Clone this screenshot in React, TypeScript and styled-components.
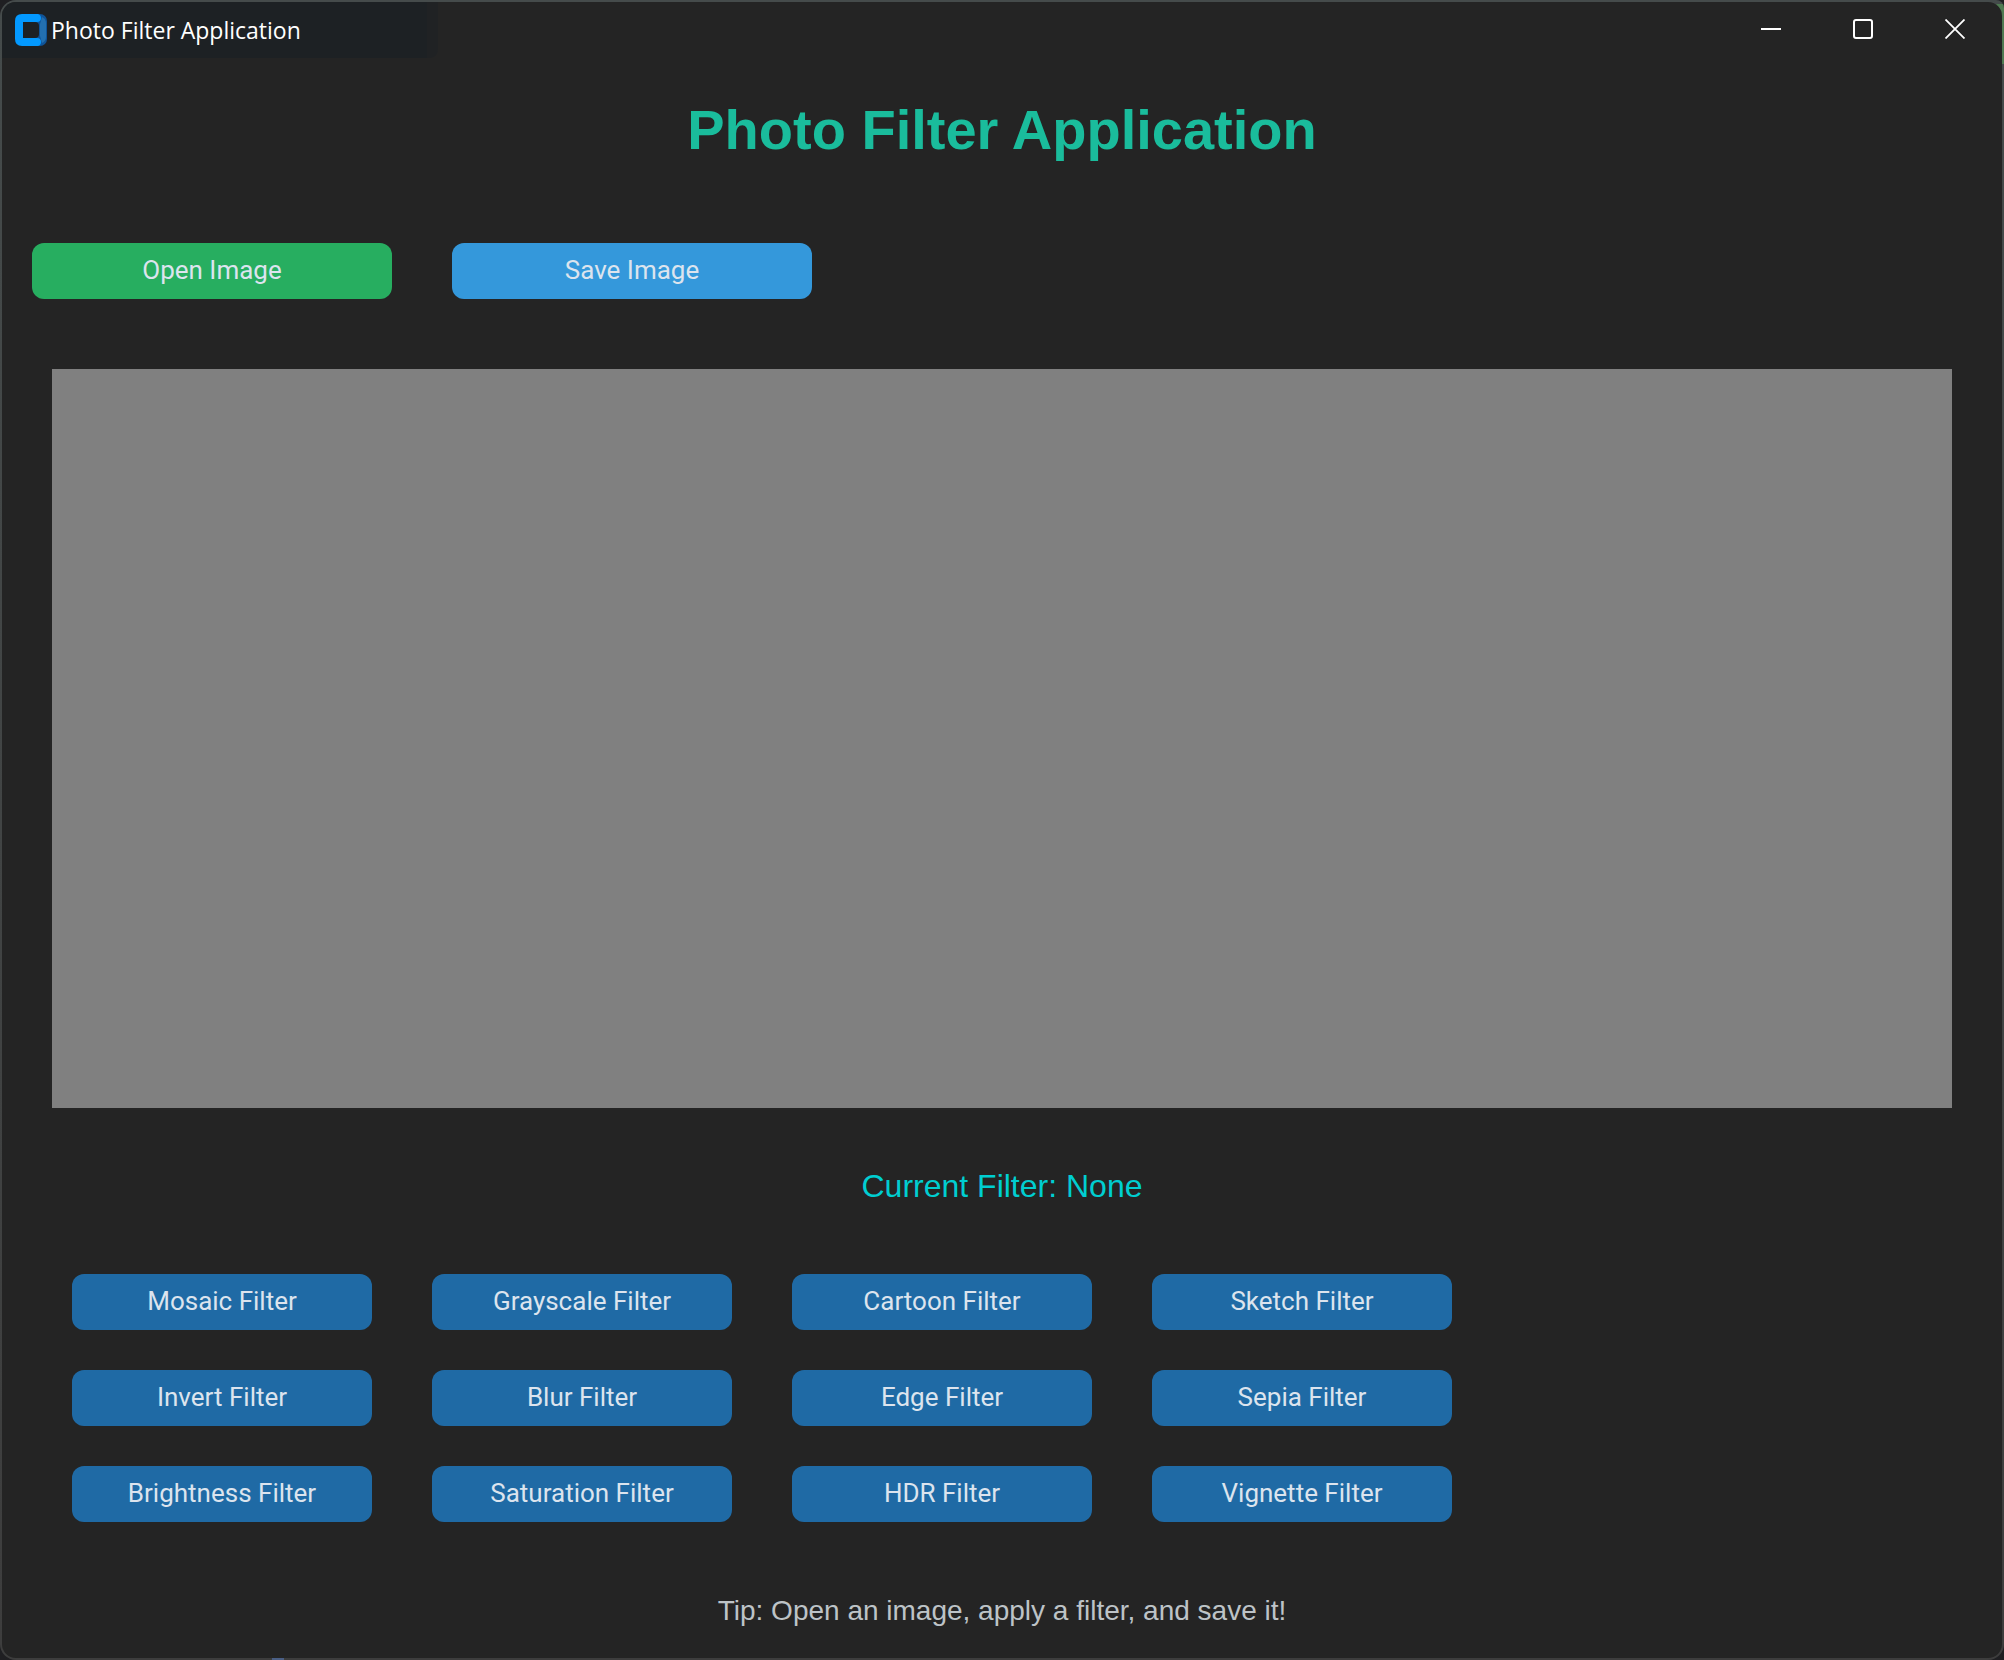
import React, { useState } from 'react';
import styled, { createGlobalStyle } from 'styled-components';

const GlobalStyle = createGlobalStyle`
  *, *::before, *::after { box-sizing: border-box; }
  body { margin: 0; background: #1f1f22; }
`;

const Frame = styled.div`
  display: flex;
  min-height: 100vh;
  padding: 2px;
  border-radius: 16px 8px 16px 16px;
  background:
    linear-gradient(#4f7a52, #4f7a52) right 4px / 14px 60px no-repeat,
    linear-gradient(#4a5f85, #4a5f85) 272px bottom / 12px 2px no-repeat,
    linear-gradient(#454b4b, #454b4b) left top / 100% 2px no-repeat,
    linear-gradient(#454b4b, #3d3d3d);
`;

const AppWindow = styled.main`
  flex: 1;
  display: flex;
  flex-direction: column;
  min-width: 0;
  border-radius: 14px;
  overflow: hidden;
  background: #242424;
`;

const TitleBar = styled.header`
  display: flex;
  justify-content: space-between;
  height: 56px;
  padding-right: 1px;
`;

const Caption = styled.div`
  display: flex;
  align-items: center;
  gap: 4px;
  width: 436px;
  padding: 0 13px;
  border-bottom-right-radius: 8px;
  background: linear-gradient(90deg, #1d2124 425px, #202224 425px);
  color: #ffffff;
  font: 23px/32px 'Open Sans', 'Noto Sans', sans-serif;
  white-space: nowrap;
`;

const WindowControls = styled.div`
  display: flex;
`;

const ControlButton = styled.button`
  display: grid;
  place-items: center;
  width: 92px;
  height: 54px;
  padding: 0;
  border: 0;
  background: transparent;
  color: #ffffff;
`;

const Heading = styled.h1`
  margin: 0;
  padding: 40px 20px 81px;
  color: #1abc9c;
  font: bold 56px/64px 'Liberation Sans', Arial, sans-serif;
  text-align: center;
`;

const ActionRow = styled.div`
  display: flex;
  gap: 60px;
  padding: 0 30px;
`;

const Button = styled.button<{ $color: string; $width: number }>`
  width: ${({ $width }) => $width}px;
  height: 56px;
  padding: 0 12px 2px;
  border: 0;
  border-radius: 12px;
  background: ${({ $color }) => $color};
  color: #dce4ee;
  font: 26px/32px Roboto, sans-serif;
`;

const Preview = styled.section`
  flex: 1;
  min-height: 300px;
  margin: 70px 50px 60px;
  background: #808080;
`;

const Status = styled.output`
  display: block;
  color: #00ced1;
  font: 32px/36px 'Liberation Sans', Arial, sans-serif;
  text-align: center;
`;

const FilterGrid = styled.div`
  display: grid;
  grid-template-columns: repeat(4, 300px);
  gap: 40px 60px;
  padding: 70px 70px 73px;
`;

const Tip = styled.p`
  margin: 0;
  padding-bottom: 31px;
  color: #bdc3c7;
  font: 28px/32px 'Liberation Sans', Arial, sans-serif;
  text-align: center;
`;

const filters = [
  'Mosaic', 'Grayscale', 'Cartoon', 'Sketch',
  'Invert', 'Blur', 'Edge', 'Sepia',
  'Brightness', 'Saturation', 'HDR', 'Vignette',
];

const Logo = () => (
  <svg width="32" height="32" viewBox="0 0 32 32" aria-hidden="true">
    <rect x="12" width="20" height="32" rx="7" fill="#0f5499" />
    <path d="M27 3Q31 5 31 9V23Q31 27 27 29L25 22V10Z" fill="#2370b0" />
    <path d="M7 0H23Q26 1 26 4Q26 8 22 8H8V24H22Q26 24 26 28Q26 31 23 32H7Q0 32 0 25V7Q0 0 7 0Z" fill="#0399ff" />
    <rect x="8" y="8" width="16" height="16" rx="4" fill="#1d2124" />
  </svg>
);

export default function App() {
  const [current, setCurrent] = useState('None');
  return (
    <>
      <GlobalStyle />
      <Frame>
        <AppWindow>
          <TitleBar>
            <Caption>
              <Logo />
              <span>Photo Filter Application</span>
            </Caption>
            <WindowControls>
              <ControlButton aria-label="Minimize">
                <svg width="20" height="20"><path d="M0 10H20" stroke="currentColor" strokeWidth="2" /></svg>
              </ControlButton>
              <ControlButton aria-label="Maximize">
                <svg width="20" height="20">
                  <rect x="1" y="1" width="18" height="18" rx="2" fill="none" stroke="currentColor" strokeWidth="2" />
                </svg>
              </ControlButton>
              <ControlButton aria-label="Close">
                <svg width="20" height="20">
                  <path d="M0.5 0.5L19.5 19.5M19.5 0.5L0.5 19.5" stroke="currentColor" strokeWidth="1.8" />
                </svg>
              </ControlButton>
            </WindowControls>
          </TitleBar>
          <Heading>Photo Filter Application</Heading>
          <ActionRow>
            <Button $color="#27ae60" $width={360}>Open Image</Button>
            <Button $color="#3498db" $width={360}>Save Image</Button>
          </ActionRow>
          <Preview aria-label="Image preview" />
          <Status>Current Filter: {current}</Status>
          <FilterGrid>
            {filters.map((name) => (
              <Button key={name} $color="#1f6aa5" $width={300} onClick={() => setCurrent(name)}>
                {name} Filter
              </Button>
            ))}
          </FilterGrid>
          <Tip>Tip: Open an image, apply a filter, and save it!</Tip>
        </AppWindow>
      </Frame>
    </>
  );
}
